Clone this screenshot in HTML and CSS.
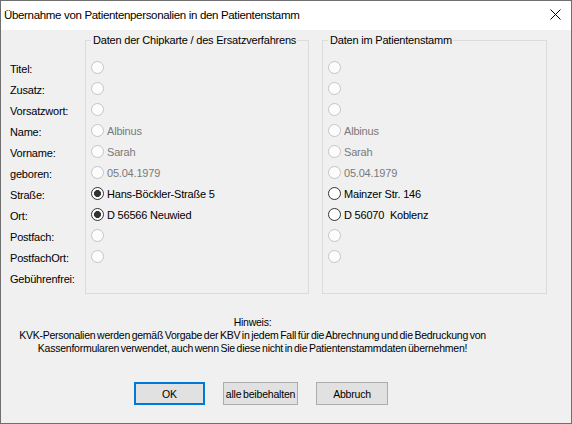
FILE: index.html
```html
<!DOCTYPE html>
<html>
<head>
	<meta charset="UTF-8">
	<title>Übernahme von Patientenpersonalien</title>
	<link rel="stylesheet" href="styles.css">
</head>
<body>
	<div class="window">
		<div class="titlebar">
			<span class="title">Übernahme von Patientenpersonalien in den Patientenstamm</span>
			<svg class="close" width="11" height="11" viewBox="0 0 11 11">
				<path d="M0.5 0.5 L10.5 10.5 M10.5 0.5 L0.5 10.5" stroke="#000" stroke-width="1" fill="none"/>
			</svg>
		</div>
		<div class="content">
			<div class="groups">
				<div class="labels">
					<div class="lbl">Titel:</div>
					<div class="lbl">Zusatz:</div>
					<div class="lbl">Vorsatzwort:</div>
					<div class="lbl">Name:</div>
					<div class="lbl">Vorname:</div>
					<div class="lbl">geboren:</div>
					<div class="lbl">Straße:</div>
					<div class="lbl">Ort:</div>
					<div class="lbl">Postfach:</div>
					<div class="lbl">PostfachOrt:</div>
					<div class="lbl">Gebührenfrei:</div>
				</div>
				<fieldset class="group group-card">
					<legend>Daten der Chipkarte / des Ersatzverfahrens</legend>
					<div class="row disabled"><span class="radio"></span></div>
					<div class="row disabled"><span class="radio"></span></div>
					<div class="row disabled"><span class="radio"></span></div>
					<div class="row disabled"><span class="radio"></span><span class="val">Albinus</span></div>
					<div class="row disabled"><span class="radio"></span><span class="val">Sarah</span></div>
					<div class="row disabled"><span class="radio"></span><span class="val">05.04.1979</span></div>
					<div class="row"><span class="radio checked"></span><span class="val">Hans-Böckler-Straße 5</span></div>
					<div class="row"><span class="radio checked"></span><span class="val">D 56566 Neuwied</span></div>
					<div class="row disabled"><span class="radio"></span></div>
					<div class="row disabled"><span class="radio"></span></div>
					<div class="row"></div>
				</fieldset>
				<fieldset class="group group-db">
					<legend>Daten im Patientenstamm</legend>
					<div class="row disabled"><span class="radio"></span></div>
					<div class="row disabled"><span class="radio"></span></div>
					<div class="row disabled"><span class="radio"></span></div>
					<div class="row disabled"><span class="radio"></span><span class="val">Albinus</span></div>
					<div class="row disabled"><span class="radio"></span><span class="val">Sarah</span></div>
					<div class="row disabled"><span class="radio"></span><span class="val">05.04.1979</span></div>
					<div class="row"><span class="radio"></span><span class="val">Mainzer Str. 146</span></div>
					<div class="row"><span class="radio"></span><span class="val">D 56070&nbsp; Koblenz</span></div>
					<div class="row disabled"><span class="radio"></span></div>
					<div class="row disabled"><span class="radio"></span></div>
					<div class="row"></div>
				</fieldset>
			</div>
			<div class="note">
				<div>Hinweis:</div>
				<div>KVK-Personalien werden gemäß Vorgabe der KBV in jedem Fall für die Abrechnung und die Bedruckung von</div>
				<div>Kassenformularen verwendet, auch wenn Sie diese nicht in die Patientenstammdaten übernehmen!</div>
			</div>
			<div class="buttons">
				<button class="btn btn-ok">OK</button>
				<button class="btn btn-keep">alle beibehalten</button>
				<button class="btn btn-cancel">Abbruch</button>
			</div>
		</div>
	</div>
</body>
</html>
```
FILE: styles.css
```css
html, body {
	margin: 0;
	padding: 0;
}
body {
	font-family: "Liberation Sans", Arial, sans-serif;
	font-size: 11px;
	color: #000;
	background: #f0f0f0;
}
.window {
	width: 572px;
	height: 424px;
	box-sizing: border-box;
	border: 1px solid #6f6f6f;
	background: #f0f0f0;
	display: flex;
	flex-direction: column;
}
.titlebar {
	height: 29px;
	background: #fff;
	display: flex;
	align-items: center;
	justify-content: space-between;
	padding: 0 10px 0 3px;
}
.title {
	font-size: 11.5px;
	letter-spacing: -0.33px;
	white-space: nowrap;
	padding-bottom: 2px;
}
.close {
	display: block;
	margin-bottom: 2px;
}
.content {
	flex: 1;
}
.groups {
	display: flex;
	align-items: flex-start;
	padding-top: 4px;
}
.labels {
	width: 75px;
	padding: 23px 0 0 9px;
}
.lbl {
	height: 21px;
	line-height: 21px;
	padding-top: 2px;
	box-sizing: border-box;
	letter-spacing: -0.2px;
	white-space: nowrap;
}
.group {
	margin: 0;
	padding: 10px 0 5px 5px;
	border: 1px solid #dcdcdc;
	box-sizing: border-box;
	min-width: 0;
}
.group legend {
	padding: 0 1px 0 2px;
	line-height: 13px;
	letter-spacing: -0.2px;
}
.group-card {
	width: 224px;
}
.group-db {
	width: 225px;
	margin-left: 13px;
}
.row {
	height: 21px;
	display: flex;
	align-items: center;
	letter-spacing: -0.2px;
	white-space: nowrap;
}
.radio {
	width: 13px;
	height: 13px;
	box-sizing: border-box;
	border: 1px solid #333;
	border-radius: 50%;
	background: #fff;
	flex: none;
}
.radio.checked {
	background: radial-gradient(circle, #333 0, #333 3.2px, #fff 3.8px);
}
.disabled .radio {
	border-color: #c4c4c4;
	background: #fcfcfc;
}
.val {
	margin-left: 3px;
	padding-top: 1px;
}
.disabled .val {
	color: #7a7a7a;
}
.note {
	width: 503px;
	margin-top: 22px;
	text-align: center;
	font-size: 10.5px;
	line-height: 13px;
	letter-spacing: -0.25px;
	word-spacing: -1px;
	white-space: nowrap;
}
.buttons {
	display: flex;
	margin: 27px 0 0 133px;
}
.btn {
	height: 23px;
	padding: 0;
	font-family: inherit;
	font-size: 10.5px;
	letter-spacing: -0.2px;
	word-spacing: -1px;
	white-space: nowrap;
	color: #000;
	background: #e1e1e1;
	border: 1px solid #adadad;
	box-sizing: border-box;
}
.btn-ok {
	width: 71px;
	border: 2px solid #0078d7;
}
.btn-keep {
	width: 75px;
	margin-left: 18px;
}
.btn-cancel {
	width: 72px;
	margin-left: 18px;
}
```
